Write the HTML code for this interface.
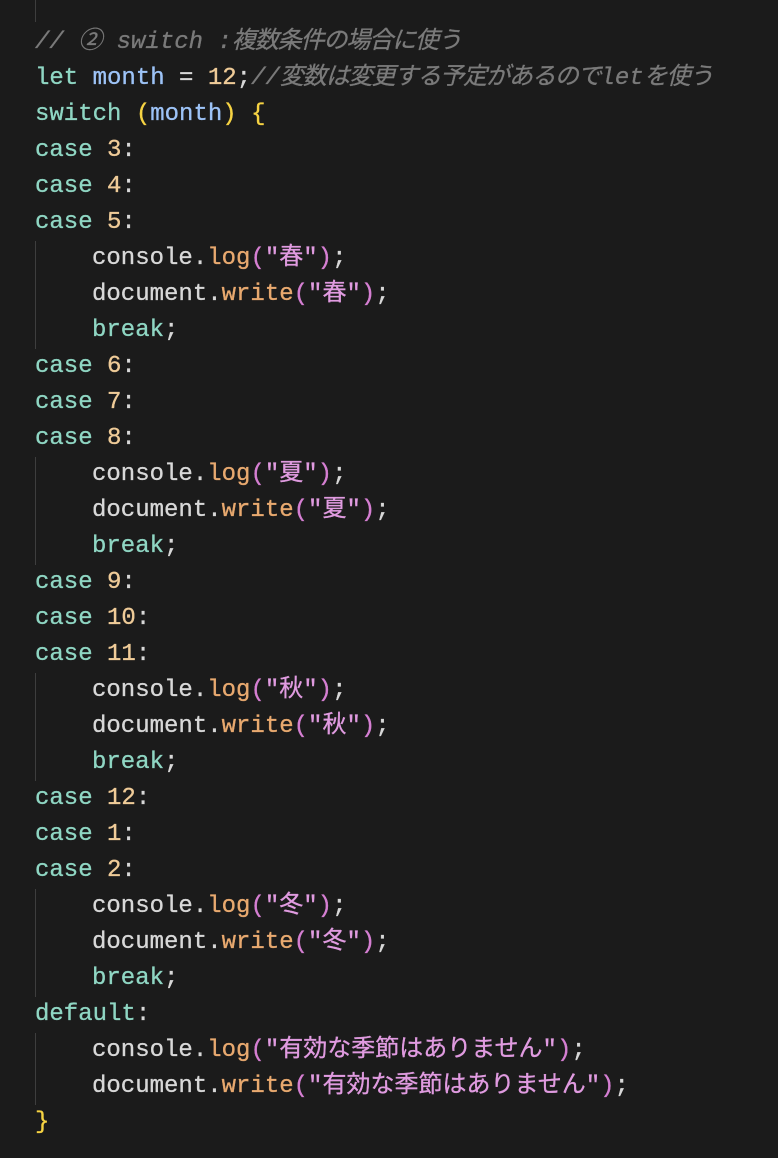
<!DOCTYPE html>
<html><head><meta charset="utf-8"><style>
body{margin:0;background:#1b1b1b;width:778px;height:1158px;overflow:hidden}
.c{position:absolute;left:35px;top:25px;font-family:"Liberation Mono","Noto Sans CJK JP",monospace;font-size:24px;line-height:36px;color:#d8d8d8;white-space:pre;-webkit-text-stroke:0.3px currentColor}
.k{color:#8fd6c3}.v{color:#9dc3f7}.n{color:#efcb98}.s{color:#e09be0}.p{color:#d57fd2}.f{color:#e8a96f}.y{color:#f6d343}.cm{color:#7a7a7a;font-style:italic}
.j{letter-spacing:-1.1px}
.in{border-left:1px solid #3e3e3e;padding-left:56px;margin-left:0}
.g{position:absolute;left:35px;top:0;width:1px;height:22px;background:#3e3e3e}
</style></head><body>
<div class="g"></div>
<div class="c"><div class="cm">// ② switch :<span class="j">複数条件の場合に使う</span></div><div><span class="k">let</span> <span class="v">month</span> = <span class="n">12</span>;<span class="cm">//<span class="j">変数は変更する予定があるので</span>let<span class="j">を使う</span></span></div><div><span class="k">switch</span> <span class="y">(</span><span class="v">month</span><span class="y">)</span> <span class="y">{</span></div><div><span class="k">case</span> <span class="n">3</span>:</div><div><span class="k">case</span> <span class="n">4</span>:</div><div><span class="k">case</span> <span class="n">5</span>:</div><div class="in"><div>console.<span class="f">log</span><span class="p">(</span><span class="s">"春"</span><span class="p">)</span>;</div><div>document.<span class="f">write</span><span class="p">(</span><span class="s">"春"</span><span class="p">)</span>;</div><div><span class="k">break</span>;</div></div><div><span class="k">case</span> <span class="n">6</span>:</div><div><span class="k">case</span> <span class="n">7</span>:</div><div><span class="k">case</span> <span class="n">8</span>:</div><div class="in"><div>console.<span class="f">log</span><span class="p">(</span><span class="s">"夏"</span><span class="p">)</span>;</div><div>document.<span class="f">write</span><span class="p">(</span><span class="s">"夏"</span><span class="p">)</span>;</div><div><span class="k">break</span>;</div></div><div><span class="k">case</span> <span class="n">9</span>:</div><div><span class="k">case</span> <span class="n">10</span>:</div><div><span class="k">case</span> <span class="n">11</span>:</div><div class="in"><div>console.<span class="f">log</span><span class="p">(</span><span class="s">"秋"</span><span class="p">)</span>;</div><div>document.<span class="f">write</span><span class="p">(</span><span class="s">"秋"</span><span class="p">)</span>;</div><div><span class="k">break</span>;</div></div><div><span class="k">case</span> <span class="n">12</span>:</div><div><span class="k">case</span> <span class="n">1</span>:</div><div><span class="k">case</span> <span class="n">2</span>:</div><div class="in"><div>console.<span class="f">log</span><span class="p">(</span><span class="s">"冬"</span><span class="p">)</span>;</div><div>document.<span class="f">write</span><span class="p">(</span><span class="s">"冬"</span><span class="p">)</span>;</div><div><span class="k">break</span>;</div></div><div><span class="k">default</span>:</div><div class="in"><div>console.<span class="f">log</span><span class="p">(</span><span class="s">"有効な季節はありません"</span><span class="p">)</span>;</div><div>document.<span class="f">write</span><span class="p">(</span><span class="s">"有効な季節はありません"</span><span class="p">)</span>;</div></div><div><span class="y">}</span></div></div>
</body></html>
